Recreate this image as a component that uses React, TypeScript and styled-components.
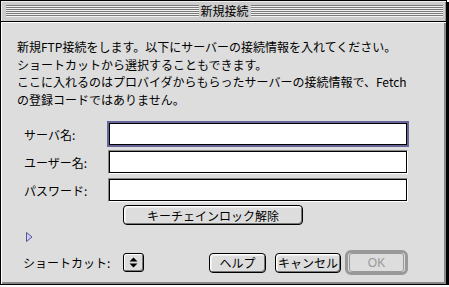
import * as React from "react";
import styled, { createGlobalStyle } from "styled-components";

const Global = createGlobalStyle`
  html, body {
    margin: 0;
    padding: 0;
    background: #ffffff;
  }
  body {
    font-family: "Noto Sans CJK JP", "Liberation Sans", sans-serif;
    font-size: 12px;
    color: #000;
  }
`;

const Window = styled.div`
  box-sizing: border-box;
  width: 447px;
  height: 285px;
  border: 1px solid #000;
  box-shadow: 2px 2px 0 #000;
  background: #cccccc;
  display: flex;
  flex-direction: column;
`;

const TitleBar = styled.div`
  box-sizing: border-box;
  height: 21px;
  flex: none;
  display: flex;
  align-items: center;
  padding: 0 3px 1px 5px;
  background: #cccccc;
  border-bottom: 1px solid #000;
  box-shadow: inset 1px 1px 0 #eeeeee, inset -1px 0 0 #999999;
`;

const Stripes = styled.div`
  flex: 1;
  height: 12px;
  background: repeating-linear-gradient(
    to bottom,
    #7a7a7a 0 1px,
    #f2f2f2 1px 2px
  );
`;

const Title = styled.div`
  padding: 0 2px;
  font-size: 12px;
  line-height: 20px;
`;

const Content = styled.div`
  flex: 1;
  box-sizing: border-box;
  padding: 16px 0 0 16px;
  background: #dddddd;
  box-shadow: inset 1px 1px 0 #ffffff, inset -2px -2px 0 #888888;
  display: flex;
  flex-direction: column;
  align-items: flex-start;
`;

const Intro = styled.p`
  margin: 0;
  font-size: 12px;
  line-height: 17.5px;
  white-space: pre;
`;

const Form = styled.div`
  margin: 14px 0 0 7px;
  display: grid;
  grid-template-columns: 84px 300px;
  grid-auto-rows: 24px;
  row-gap: 4px;
  align-items: center;
`;

const Label = styled.label`
  font-size: 12px;
  white-space: nowrap;
`;

const Field = styled.input<{ $focused?: boolean }>`
  box-sizing: border-box;
  width: ${(p) => (p.$focused ? "302px" : "300px")};
  height: ${(p) => (p.$focused ? "26px" : "24px")};
  margin: ${(p) => (p.$focused ? "0 -1px" : "0")};
  padding: 0 4px;
  background: #fff;
  outline: none;
  font: inherit;
  border: ${(p) => (p.$focused ? "2px solid #65659a" : "1px solid")};
  border-color: ${(p) =>
    p.$focused ? "#65659a" : "#888888 #ffffff #ffffff #888888"};
  box-shadow: inset 0 0 0 1px #000;
`;

const PushButton = styled.button<{ $w: number }>`
  box-sizing: border-box;
  width: ${(p) => p.$w}px;
  height: 20px;
  padding: 0;
  border: 1px solid #000;
  border-radius: 4px;
  background: #dddddd;
  box-shadow: inset 1px 1px 0 #ffffff, inset -1px -1px 0 #777777,
    inset 2px 2px 0 #eeeeee;
  font-family: inherit;
  font-size: 12px;
  line-height: 17px;
  color: #000;
  text-align: center;
`;

const KeychainButton = styled(PushButton)`
  margin: 3px 0 0 106px;
`;

const CancelButton = styled(PushButton)`
  margin-left: 9px;
`;

const Disclosure = styled.svg`
  display: block;
  margin: 7px 0 0 9px;
`;

const BottomRow = styled.div`
  margin: 8px 0 0 6px;
  height: 25px;
  display: flex;
  align-items: center;
`;

const ShortcutLabel = styled.span`
  width: 100px;
  font-size: 12px;
  white-space: nowrap;
`;

const Stepper = styled.div`
  box-sizing: border-box;
  width: 21px;
  height: 19px;
  border: 1px solid #000;
  border-radius: 3px;
  background: #dddddd;
  box-shadow: inset 1px 1px 0 #ffffff, inset -1px -1px 0 #777777;
  display: flex;
  align-items: center;
  justify-content: center;
`;

const Buttons = styled.div`
  margin-left: 65px;
  display: flex;
  align-items: center;
`;

const DefaultRing = styled.div`
  box-sizing: border-box;
  width: 63px;
  height: 25px;
  margin-left: 4px;
  border: 3px solid #999999;
  border-radius: 6px;
  display: flex;
  align-items: center;
  justify-content: center;
  background: #dddddd;
`;

const DisabledButton = styled.button`
  box-sizing: border-box;
  width: 55px;
  height: 19px;
  padding: 0;
  border: 1px solid #999999;
  border-radius: 3px;
  background: #dddddd;
  font-family: "Liberation Sans", sans-serif;
  font-size: 12px;
  color: #999999;
`;

const introText = [
  "新規FTP接続をします。以下にサーバーの接続情報を入れてください。",
  "ショートカットから選択することもできます。",
  "ここに入れるのはプロバイダからもらったサーバーの接続情報で、Fetch",
  "の登録コードではありません。",
].join("\n");

export default function App() {
  return (
    <>
      <Global />
      <Window>
        <TitleBar>
          <Stripes />
          <Title>新規接続</Title>
          <Stripes />
        </TitleBar>
        <Content>
          <Intro>{introText}</Intro>
          <Form>
            <Label>サーバ名:</Label>
            <Field $focused />
            <Label>ユーザー名:</Label>
            <Field />
            <Label>パスワード:</Label>
            <Field type="password" />
          </Form>
          <KeychainButton $w={180}>キーチェインロック解除</KeychainButton>
          <Disclosure width="7" height="10" viewBox="0 0 7 10">
            <polygon
              points="0.5,0.5 6,5 0.5,9.5"
              fill="#ccccff"
              stroke="#55558c"
              strokeWidth="1"
            />
          </Disclosure>
          <BottomRow>
            <ShortcutLabel>ショートカット:</ShortcutLabel>
            <Stepper>
              <svg width="9" height="11" viewBox="0 0 9 11">
                <polygon points="4.5,0.5 8.5,4.5 0.5,4.5" fill="#000" />
                <polygon points="0.5,6.5 8.5,6.5 4.5,10.5" fill="#000" />
              </svg>
            </Stepper>
            <Buttons>
              <PushButton $w={57}>ヘルプ</PushButton>
              <CancelButton $w={66}>キャンセル</CancelButton>
              <DefaultRing>
                <DisabledButton disabled>OK</DisabledButton>
              </DefaultRing>
            </Buttons>
          </BottomRow>
        </Content>
      </Window>
    </>
  );
}
